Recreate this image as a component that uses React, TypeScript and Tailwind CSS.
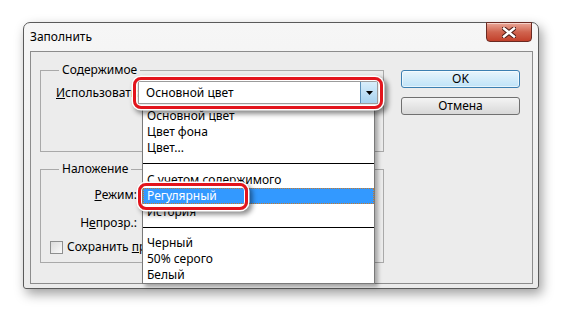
import { type ReactNode } from 'react'

const font = { fontFamily: '"Noto Sans", "Open Sans", sans-serif' }

function GroupBox({ title, className, children }: { title: string; className: string; children: ReactNode }) {
  return (
    <div className={`relative w-[344px] border border-[#a9a9a9] ${className}`}>
      <span className="absolute -top-[9px] left-[18px] bg-[#ececec] px-[3px] leading-[16px]">{title}</span>
      {children}
    </div>
  )
}

function Menu() {
  const item = 'h-[16px] pl-[4px] leading-[16px] whitespace-nowrap'
  return (
    <div className="absolute left-[142px] top-[106px] flex h-[178px] w-[233px] flex-col border border-[#7a7a7a] bg-white pt-[1px] shadow-[3px_3px_4px_rgba(0,0,0,0.3)]">
      <div className={item}>Основной цвет</div>
      <div className={item}>Цвет фона</div>
      <div className={item}>Цвет...</div>
      <div className="flex h-[16px] items-center">
        <div className="h-px w-full bg-black" />
      </div>
      <div className={item}>С учетом содержимого</div>
      <div className="h-[16px] whitespace-nowrap border border-dotted border-[#c87a2a] bg-[#3399ff] pl-[3px] text-[12px] leading-[14px] text-white">
        Регулярный
      </div>
      <div className={item}>История</div>
      <div className="flex h-[16px] items-center">
        <div className="h-px w-full bg-black" />
      </div>
      <div className={item}>Черный</div>
      <div className={item}>50% серого</div>
      <div className={item}>Белый</div>
    </div>
  )
}

function RedBox({ className }: { className: string }) {
  return (
    <div
      className={`absolute rounded-[8px] border-[3px] border-[#e3141c] shadow-[0_0_0_1.5px_#ffffff,inset_0_0_0_1px_#ffffff,3px_3px_5px_1.5px_rgba(0,0,0,0.45)] ${className}`}
    />
  )
}

export default function App() {
  return (
    <div className="relative h-[312px] w-[561px] overflow-hidden bg-white pl-[23px] pt-[22px] text-[12px] text-black" style={font}>
      {/* window */}
      <div className="relative flex h-[267px] w-[516px] flex-col rounded-t-[7px] rounded-b-[3px] border border-[#5a5a5a] bg-gradient-to-b from-[#f6f6f6] to-[#ebebeb] shadow-[3px_5px_12px_rgba(0,0,0,0.38)]">
        <div className="flex h-[28px] items-center pl-[6px]">Заполнить</div>
        <button className="absolute right-[6px] -top-px flex h-[20px] w-[46px] items-center justify-center rounded-b-[4px] border border-[#6b2a22] bg-gradient-to-b from-[#e9a697] via-[#d0644f] to-[#c2402a] shadow-[inset_0_1px_0_rgba(255,255,255,0.5)]">
          <svg width="14" height="11" viewBox="0 0 14 11">
            <path d="M2 1.5 L12 9.5 M12 1.5 L2 9.5" stroke="#4a1a14" strokeWidth="4.5" strokeLinecap="square" />
            <path d="M2 1.5 L12 9.5 M12 1.5 L2 9.5" stroke="#ffffff" strokeWidth="2.5" strokeLinecap="square" />
          </svg>
        </button>

        {/* client area */}
        <div className="ml-[6px] mr-[5px] flex h-[233px] border border-[#8c8c8c] bg-[#ececec] pl-[9px] pt-[18px]">
          <div className="flex flex-col">
            <GroupBox title="Содержимое" className="h-[82px]">
              <div className="flex items-center pl-[15px] pt-[10px]">
                <span className="w-[82px] whitespace-nowrap">
                  <span className="underline">И</span>спользовать:
                </span>
                <div className="flex h-[23px] w-[240px] items-center border border-[#9c9c9c] bg-white">
                  <span className="flex-1 pl-[7px]">Основной цвет</span>
                  <div className="flex h-full w-[17px] items-center justify-center border-l border-[#5a8fb8] bg-gradient-to-b from-[#d9eefb] to-[#a7d2ef]">
                    <svg width="7" height="4" viewBox="0 0 7 4">
                      <path d="M0 0 H7 L3.5 4 Z" fill="#000" />
                    </svg>
                  </div>
                </div>
              </div>
            </GroupBox>

            <GroupBox title="Наложение" className="mt-[17px] h-[94px]">
              <div className="flex flex-col pt-[15px]">
                <div className="flex h-[20px] items-center">
                  <span className="w-[96px] text-right">
                    <span className="underline">Р</span>ежим:
                  </span>
                </div>
                <div className="mt-[8px] flex h-[20px] items-center">
                  <span className="w-[96px] text-right">
                    Н<span className="underline">е</span>прозр.:
                  </span>
                </div>
                <div className="mt-[4px] flex h-[20px] items-center pl-[9px]">
                  <span className="h-[13px] w-[13px] shrink-0 border border-[#8e8f8f] bg-gradient-to-br from-[#dcdcdc] to-[#fafafa]" />
                  <span className="ml-[4px] whitespace-nowrap">
                    Сохранить <span className="underline">пр</span>
                  </span>
                </div>
              </div>
            </GroupBox>
          </div>

          <div className="ml-[17px] flex flex-col gap-[9px]">
            <button className="h-[18px] w-[119px] rounded-[3px] border border-[#3c7fb1] bg-gradient-to-b from-[#e8f5fc] to-[#bfe3f8] leading-[16px] shadow-[inset_0_0_0_1px_rgba(255,255,255,0.6)]">
              OK
            </button>
            <button className="h-[18px] w-[119px] rounded-[3px] border border-[#707070] bg-gradient-to-b from-[#f4f4f4] to-[#d8d8d8] leading-[16px]">
              Отмена
            </button>
          </div>
        </div>
      </div>

      <Menu />
      <RedBox className="left-[133px] top-[77px] h-[32px] w-[250px]" />
      <RedBox className="left-[138px] top-[183px] h-[27px] w-[110px]" />
    </div>
  )
}
